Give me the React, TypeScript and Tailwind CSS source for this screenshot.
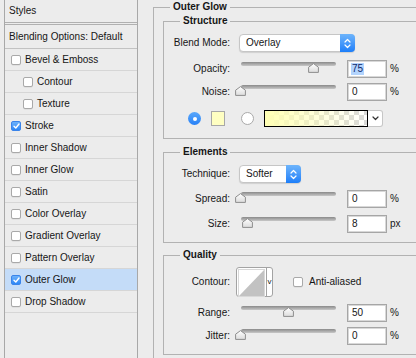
import React from 'react'

// Layer Style dialog, "Outer Glow" page

const styleItems = [
  { label: 'Bevel & Emboss' },
  { label: 'Contour', indent: true },
  { label: 'Texture', indent: true },
  { label: 'Stroke', checked: true },
  { label: 'Inner Shadow' },
  { label: 'Inner Glow' },
  { label: 'Satin' },
  { label: 'Color Overlay' },
  { label: 'Gradient Overlay' },
  { label: 'Pattern Overlay' },
  { label: 'Outer Glow', checked: true, selected: true },
  { label: 'Drop Shadow' },
]

function Checkbox({ checked }: { checked?: boolean }) {
  if (checked) {
    return (
      <span className="flex h-[10px] w-[10px] shrink-0 items-center justify-center rounded-[2px] border border-[#3a84ea] bg-linear-to-b from-[#6cb2fb] to-[#2b86f6]">
        <svg width="7" height="6" viewBox="0 0 7 6">
          <path d="M1 3.2 L2.8 5 L6 1" fill="none" stroke="white" strokeWidth="1.4" strokeLinecap="round" strokeLinejoin="round" />
        </svg>
      </span>
    )
  }
  return <span className="block h-[10px] w-[10px] shrink-0 rounded-[2px] border border-[#a9a9a9] bg-white shadow-[0_0.5px_0.5px_rgba(0,0,0,0.1)]" />
}

function StylesPanel() {
  return (
    <div className="w-[138px] shrink-0 pl-[4px]">
      <div className="h-full border-x border-[#a8a8a8] bg-[#ececec]">
        <div className="flex h-[25px] items-center border-b-[3px] border-double border-[#b0b0b0] pl-[4px]">Styles</div>
        <div className="flex h-[24px] items-center border-b border-[#c2c2c2] pl-[4px]">Blending Options: Default</div>
        {styleItems.map((item) => (
          <div
            key={item.label}
            className={`flex h-[22px] items-center gap-[4px] border-b border-[#d6d6d6] ${item.indent ? 'pl-[18px]' : 'pl-[6px]'} ${item.selected ? 'bg-[#c4dcf8]' : ''}`}
          >
            <Checkbox checked={item.checked} />
            <span>{item.label}</span>
          </div>
        ))}
      </div>
    </div>
  )
}

function Group({ title, className, children }: { title: string; className?: string; children: React.ReactNode }) {
  return (
    <fieldset className={`border border-[#b2b2b2] ${className ?? ''}`}>
      <legend className="ml-[16px] px-[3px] font-bold leading-[12px]">{title}</legend>
      {children}
    </fieldset>
  )
}

function Label({ children }: { children: React.ReactNode }) {
  return <span className="w-[66px] shrink-0 text-right">{children}</span>
}

function Stepper() {
  return (
    <span className="-my-px -mr-px flex w-[15px] items-center justify-center self-stretch rounded-r-[4px] bg-linear-to-b from-[#6db4fb] to-[#1b7ef9]">
      <svg width="7" height="11" viewBox="0 0 7 11">
        <path d="M1 4 L3.5 1.5 L6 4 M1 7 L3.5 9.5 L6 7" fill="none" stroke="white" strokeWidth="1.2" strokeLinecap="round" strokeLinejoin="round" />
      </svg>
    </span>
  )
}

function Select({ value, width }: { value: string; width: string }) {
  return (
    <div className={`ml-[9px] flex h-[18px] items-center rounded-[4px] border border-[#c6c6c6] bg-white shadow-[0_1px_1px_rgba(0,0,0,0.12)] ${width}`}>
      <span className="flex-1 pl-[6px]">{value}</span>
      <Stepper />
    </div>
  )
}

function Slider({ thumb }: { thumb: number }) {
  return (
    <div className="relative ml-[11px] h-full w-[95px]">
      <div className="mt-[2px] h-[4px] rounded-full bg-linear-to-b from-[#8a8a8a] to-[#c8c8c8]" />
      <svg className="absolute top-[3px]" style={{ left: thumb - 5.5 }} width="11" height="10" viewBox="0 0 11 10">
        <defs>
          <linearGradient id="thumbFill" x1="0" y1="0" x2="0" y2="1">
            <stop offset="0" stopColor="#ffffff" />
            <stop offset="1" stopColor="#dcdcdc" />
          </linearGradient>
        </defs>
        <path d="M5.5 0.6 L10.4 4.2 L10.4 9.4 L0.6 9.4 L0.6 4.2 Z" fill="url(#thumbFill)" stroke="#8d8d8d" strokeWidth="1" strokeLinejoin="round" />
      </svg>
    </div>
  )
}

function NumberBox({ value, selected }: { value: string; selected?: boolean }) {
  return (
    <div className="ml-[11px] flex h-[18px] w-[40px] items-center border border-[#a6a6a6] bg-white pl-[3px] shadow-[inset_0_0_0_1px_#d8d8d8]">
      <span className={selected ? 'bg-[#b3d4fd] px-px text-[#0c2a6a]' : 'px-px'}>{value}</span>
    </div>
  )
}

function SliderRow({ label, thumb, value, unit, selected, className }: { label: string; thumb: number; value: string; unit: string; selected?: boolean; className?: string }) {
  return (
    <div className={`flex h-[18px] items-center ${className ?? ''}`}>
      <Label>{label}</Label>
      <Slider thumb={thumb} />
      <NumberBox value={value} selected={selected} />
      <span className="ml-[3px]">{unit}</span>
    </div>
  )
}

function GradientSwatch() {
  return (
    <svg width="104" height="17" viewBox="0 0 104 17" className="block">
      <defs>
        <pattern id="checker" width="10" height="10" patternUnits="userSpaceOnUse">
          <rect width="10" height="10" fill="#ffffff" />
          <rect width="5" height="5" fill="#d9d9d9" />
          <rect x="5" y="5" width="5" height="5" fill="#d9d9d9" />
        </pattern>
        <linearGradient id="glowFade" x1="0" y1="0" x2="1" y2="0">
          <stop offset="0" stopColor="#ffffb4" stopOpacity="1" />
          <stop offset="1" stopColor="#ffffb4" stopOpacity="0" />
        </linearGradient>
      </defs>
      <rect width="104" height="17" fill="url(#checker)" />
      <rect width="104" height="17" fill="url(#glowFade)" />
      <rect x="0.5" y="0.5" width="103" height="16" fill="none" stroke="#000" />
    </svg>
  )
}

function ContourPicker() {
  return (
    <div className="ml-[6px] flex h-[30px] w-[37px] rounded-[3px] border border-[#a3a3a3] bg-white">
      <svg width="27" height="28" viewBox="0 0 27 28" className="m-px block">
        <rect x="0.5" y="0.5" width="26" height="27" fill="#fff" stroke="#d8d8d8" />
        <path d="M1 27 L26 1 L26 27 Z" fill="#c2c2c2" />
      </svg>
      <span className="flex flex-1 items-center justify-center border-l border-[#a3a3a3] text-[8px]">v</span>
    </div>
  )
}

export default function App() {
  return (
    <div className="flex h-[358px] w-[416px] overflow-hidden bg-[#ececec] font-['Liberation_Sans',Arial,sans-serif] text-[10px] leading-[12px] text-[#161616]">
      <StylesPanel />

      <div className="ml-[15px] shrink-0 pt-px">
        <Group title="Outer Glow" className="h-[400px] w-[300px]">
          <Group title="Structure" className="ml-[9px] mt-[2px] w-[280px] pb-[11px] pt-[7px]">
            <div className="flex h-[18px] items-center">
              <Label>Blend Mode:</Label>
              <Select value="Overlay" width="w-[116px]" />
            </div>
            <SliderRow label="Opacity:" thumb={72} value="75" unit="%" selected className="mt-[8px]" />
            <SliderRow label="Noise:" thumb={-1} value="0" unit="%" className="mt-[5px]" />
            <div className="mt-[9px] flex h-[17px] items-center">
              <span className="ml-[24px] flex h-[13px] w-[13px] items-center justify-center rounded-full bg-linear-to-b from-[#5aa8fb] to-[#2580f6]">
                <span className="h-[4px] w-[4px] rounded-full bg-white" />
              </span>
              <span className="ml-[10px] h-[15px] w-[14px] border border-[#a8a8a8] bg-[#ffffc2]" />
              <span className="ml-[16px] h-[13px] w-[13px] rounded-full border border-[#a9a9a9] bg-white" />
              <span className="ml-[10px]">
                <GradientSwatch />
              </span>
              <span className="flex h-[17px] w-[15px] items-center justify-center rounded-r-[3px] border border-l-0 border-[#c6c6c6] bg-white">
                <svg width="7" height="5" viewBox="0 0 7 5">
                  <path d="M1 1 L3.5 3.5 L6 1" fill="none" stroke="#333" strokeWidth="1.2" strokeLinecap="round" strokeLinejoin="round" />
                </svg>
              </span>
            </div>
          </Group>

          <Group title="Elements" className="ml-[9px] mt-[7px] w-[280px] pb-[9px] pt-[7px]">
            <div className="flex h-[18px] items-center">
              <Label>Technique:</Label>
              <Select value="Softer" width="w-[62px]" />
            </div>
            <SliderRow label="Spread:" thumb={-1} value="0" unit="%" className="mt-[7px]" />
            <SliderRow label="Size:" thumb={6} value="8" unit="px" className="mt-[7px]" />
          </Group>

          <Group title="Quality" className="ml-[9px] mt-[6px] w-[280px] pb-[9px] pt-[6px]">
            <div className="flex h-[30px] items-center">
              <Label>Contour:</Label>
              <ContourPicker />
              <span className="ml-[20px] flex">
                <Checkbox />
              </span>
              <span className="ml-[6px]">Anti-aliased</span>
            </div>
            <SliderRow label="Range:" thumb={47} value="50" unit="%" className="mt-[7px]" />
            <SliderRow label="Jitter:" thumb={-1} value="0" unit="%" className="mt-[5px]" />
          </Group>
        </Group>
      </div>
    </div>
  )
}
